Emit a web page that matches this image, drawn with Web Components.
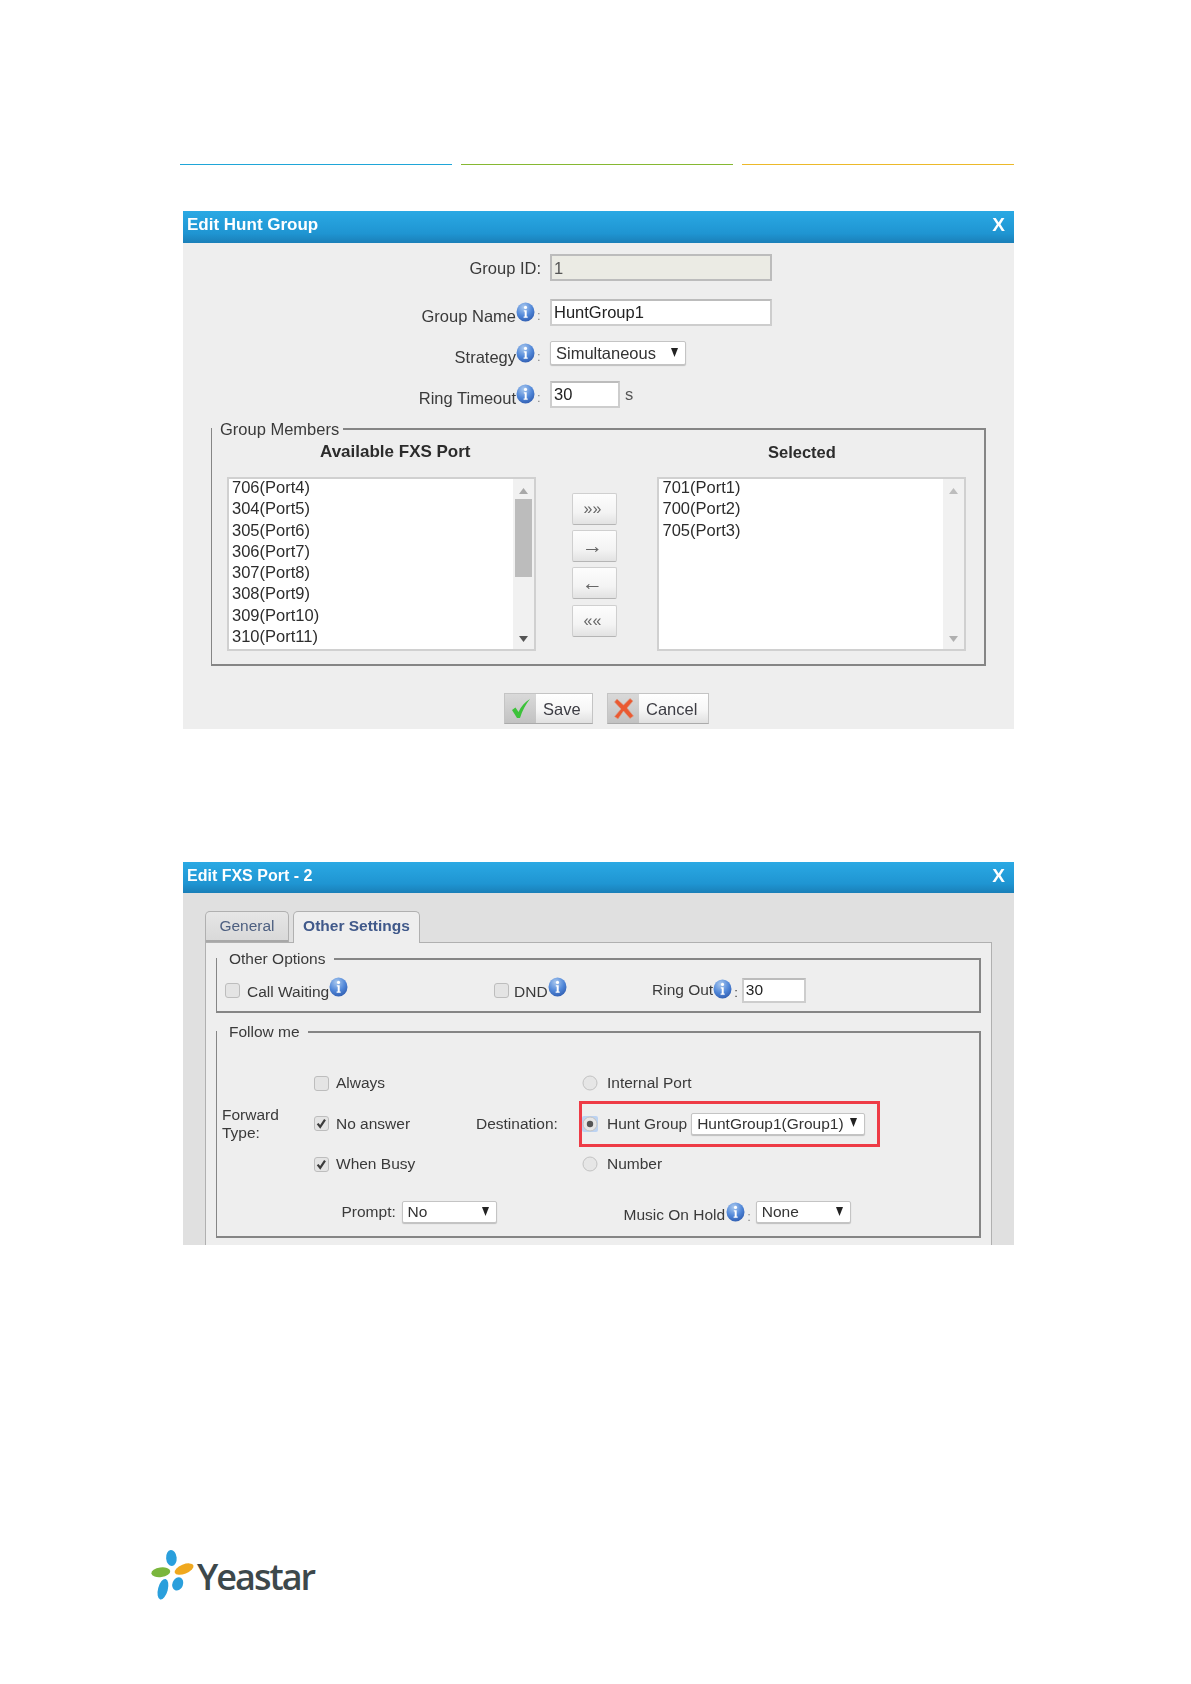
<!DOCTYPE html>
<html>
<head>
<meta charset="utf-8">
<title>Hunt Group</title>
<style>
  body { margin: 0; background: #fff; font: 16.5px/20px "Liberation Sans", Arial, sans-serif; color: #333; }
  main { width: 1191px; height: 1684px; box-sizing: border-box; padding: 164px 177px 0 180px; display: flex; flex-direction: column; overflow: hidden; }
  rule-bars { margin-bottom: 46px; }
  edit-dialog { margin-left: 3px; filter: blur(.35px); }
  .second { margin-top: 133px; font-size: 15.5px; }
  yeastar-logo { margin-top: 304px; margin-left: -30px; }
</style>
</head>
<body>
<main>
  <rule-bars></rule-bars>
  <edit-dialog heading="Edit Hunt Group" style="--head-h:32px;--head-size:17px"><hunt-group-form></hunt-group-form></edit-dialog>
  <edit-dialog class="second" heading="Edit FXS Port - 2" style="--head-h:31px;--head-size:16px"><fxs-port-form></fxs-port-form></edit-dialog>
  <yeastar-logo></yeastar-logo>
</main>

<script>
class RuleBars extends HTMLElement {
  connectedCallback() {
    this.attachShadow({ mode: "open" }).innerHTML = `
      <style>
        :host { display: flex; gap: 9px; }
        i { flex: 1; height: 1px; }
      </style>
      <i style="background:#1fa6d8"></i><i style="background:#86b832"></i><i style="background:#ecb92a"></i>`;
  }
}

class EditDialog extends HTMLElement {
  connectedCallback() {
    this.attachShadow({ mode: "open" }).innerHTML = `
      <style>
        :host { display: block; }
        header {
          height: var(--head-h); box-sizing: border-box; display: flex; align-items: center; justify-content: space-between;
          padding: 0 9px 4px 4px; color: #fff; font-weight: bold; font-size: var(--head-size);
          background: linear-gradient(#2aa9e4, #1f95d2 70%, #1a7fb8);
        }
        b { font-size: 19px; }
      </style>
      <header><span>${this.getAttribute("heading")}</span><b>X</b></header>
      <slot></slot>`;
  }
}

class InfoIcon extends HTMLElement {
  connectedCallback() {
    this.attachShadow({ mode: "open" }).innerHTML = `
      <style>:host { display: inline-flex; flex: none; } svg { display: block; }</style>
      <svg width="19" height="20" viewBox="0 0 19 20">
        <defs><radialGradient id="g" cx=".4" cy=".25" r=".85">
          <stop offset="0" stop-color="#a9c8ee"/><stop offset=".55" stop-color="#4f86d8"/><stop offset="1" stop-color="#2a55a8"/>
        </radialGradient></defs>
        <ellipse cx="9.5" cy="10" rx="9" ry="9.5" fill="url(#g)"/>
        <circle cx="9.5" cy="5.4" r="1.6" fill="#fff"/>
        <path d="M7.8 8.2h2.9v6.2h1v1.4H7.6v-1.4h1.1V9.6h-.9z" fill="#fff"/>
      </svg>`;
  }
}

class FakeSelect extends HTMLElement {
  connectedCallback() {
    this.attachShadow({ mode: "open" }).innerHTML = `
      <style>
        :host {
          display: flex; align-items: center; justify-content: space-between; box-sizing: border-box;
          background: #fff; border: 1px solid #c4c4c4; border-radius: 2px; box-shadow: 0 1px 1px rgba(0,0,0,.2);
          padding: 0 7px 0 5px; color: #333;
        }
        svg { flex: none; margin-bottom: 2px; }
      </style>
      <span>${this.getAttribute("value")}</span>
      <svg width="7" height="9" viewBox="0 0 7 9"><path d="M0 0h7L3.5 9z" fill="#222"/></svg>`;
  }
}

class TextBox extends HTMLElement {
  connectedCallback() {
    this.attachShadow({ mode: "open" }).innerHTML = `
      <style>
        :host {
          display: flex; align-items: center; box-sizing: border-box; padding-left: 2px;
          background: #fff; border: 2px solid #cdcdcd; border-top-color: #bcbcbc; color: #222;
        }
        :host([disabled]) { background: #ebebe4; color: #555; border-color: #bcbcbc; }
      </style>
      <span>${this.getAttribute("value")}</span>`;
  }
}

class GroupBox extends HTMLElement {
  connectedCallback() {
    this.attachShadow({ mode: "open" }).innerHTML = `
      <style>
        :host { display: block; }
        fieldset { margin: 0; padding: 0; border: 2px solid #858585; border-left-width: 1.5px; min-width: 0; }
        legend { padding: var(--legend-pad, 0 4px 0 8px); margin: 0; line-height: 20px; color: #3a3a3a; }
      </style>
      <fieldset><legend>${this.getAttribute("legend")}</legend><slot></slot></fieldset>`;
  }
}

class ListBox extends HTMLElement {
  connectedCallback() {
    const items = this.getAttribute("items").split(",");
    const full = this.hasAttribute("scrolled");
    this.attachShadow({ mode: "open" }).innerHTML = `
      <style>
        :host {
          display: flex; height: 174px; box-sizing: border-box; background: #fff;
          border: 2px solid #d0d0d0; overflow: hidden;
        }
        ul { flex: 1; margin: -2px 0 0; padding: 0 0 0 3px; list-style: none; color: #2c2c2c; }
        li { height: 21.3px; line-height: 21px; }
        .bar { width: 21px; background: #f1f1f1; display: flex; flex-direction: column; align-items: center; padding: 9px 0 7px; box-sizing: border-box; }
        .thumb { width: 17px; height: 78px; background: #bcbcbc; margin-top: 5px; visibility: ${full ? "visible" : "hidden"}; }
        .gap { flex: 1; }
        svg { fill: ${full ? "#a8a8a8" : "#bdbdbd"}; }
        svg.down { fill: ${full ? "#555" : "#b0b0b0"}; }
      </style>
      <ul>${items.map((t) => `<li>${t}</li>`).join("")}</ul>
      <div class="bar">
        <svg width="9" height="6" viewBox="0 0 9 6"><path d="M4.5 0L9 6H0z"/></svg>
        <div class="thumb"></div><div class="gap"></div>
        <svg class="down" width="9" height="6" viewBox="0 0 9 6"><path d="M0 0h9L4.5 6z"/></svg>
      </div>`;
  }
}

class MoveButton extends HTMLElement {
  connectedCallback() {
    this.attachShadow({ mode: "open" }).innerHTML = `
      <style>
        :host {
          display: flex; align-items: center; justify-content: center; height: 32px; box-sizing: border-box;
          padding-right: 4px; border: 1px solid #cfcfcf; border-bottom-color: #b5b5b5; border-radius: 2px;
          background: linear-gradient(#fdfdfd, #f4f4f4 60%, #e2e2e2); color: #666; font-size: 16px;
        }
      </style>
      <slot></slot>`;
  }
}

class ActionButton extends HTMLElement {
  connectedCallback() {
    const save = this.getAttribute("kind") === "save";
    const icon = save
      ? `<path d="M2 13l3.5-2.5 3 4.5C11 9.5 15 5 20 2c-4 5-8 12-10 19h-3z" fill="#3cc23a"/>`
      : `<path d="M4 2l6.5 6L17 1.5l3 2.5-6 7 6.5 8-3.5 2.5-6.5-7.5L5 22l-3.5-2.5L8 12 1.5 5z" fill="#ea5a32" stroke="#d8a08c" stroke-width=".7"/>`;
    this.attachShadow({ mode: "open" }).innerHTML = `
      <style>
        :host {
          display: flex; height: 31px; box-sizing: border-box; border: 1px solid #c4c4c4; border-bottom-color: #aaa;
          background: linear-gradient(#fff, #f6f6f6 55%, #e0e0e0); color: #3d3d44; overflow: hidden;
        }
        .ic { width: 31px; display: flex; align-items: center; justify-content: center; background: linear-gradient(#d9d9d9, #c2c2c2); }
        span { flex: 1; align-self: center; padding-left: 7px; }
      </style>
      <div class="ic"><svg width="22" height="24" viewBox="0 0 22 24">${icon}</svg></div>
      <span><slot></slot></span>`;
  }
}

class HuntGroupForm extends HTMLElement {
  connectedCallback() {
    const row = (label, info, control, mt, extra = "") => `
      <div class="row" style="margin-top:${mt}px">
        <div class="label">
          <span class="${info ? "low" : ""}">${label}${info ? "" : ":"}</span>${info ? `<info-icon></info-icon><span class="low colon">:</span>` : ""}
        </div>
        ${control}${extra}
      </div>`;
    this.attachShadow({ mode: "open" }).innerHTML = `
      <style>
        :host { display: block; background: #eee; height: 486px; padding-top: 11px; box-sizing: border-box; }
        .row { display: flex; align-items: center; }
        .label { width: 358px; margin-right: 9px; display: flex; align-items: center; justify-content: flex-end; color: #3a3a3a; }
        .low { padding-top: 8px; }
        .colon { color: #888; font-size: 13px; margin-left: 2px; width: 4px; }
        .unit { margin-left: 5px; color: #555; }
        group-box { margin: 11px 28px 0; }
        .heads { display: flex; height: 25px; align-items: center; font-weight: bold; font-size: 17px; color: #2c2c2c; }
        .heads div:first-child { width: 432px; padding-left: 108px; box-sizing: border-box; }
        .heads div:last-child { margin-left: 124px; font-size: 16.5px; }
        .lists { display: flex; padding: 13px 18px 13px 15px; }
        list-box { width: 309px; }
        list-box + .moves + list-box { width: 309px; }
        .moves { width: 46px; margin: 16px 40px 0 36px; display: flex; flex-direction: column; gap: 5.2px; }
        .moves .big { font-size: 21px; }
        .actions { display: flex; gap: 14px; margin: 27px 0 0 321px; }
      </style>
      ${row("Group ID", false, `<text-box value="1" disabled style="width:222px;height:27px"></text-box>`, 0)}
      ${row("Group Name", true, `<text-box value="HuntGroup1" style="width:222px;height:27px"></text-box>`, 17)}
      ${row("Strategy", true, `<fake-select value="Simultaneous" style="width:136px;height:24px"></fake-select>`, 13)}
      ${row("Ring Timeout", true, `<text-box value="30" style="width:70px;height:27px"></text-box>`, 13, `<span class="unit">s</span>`)}
      <group-box legend="Group Members">
        <div class="heads"><div>Available FXS Port</div><div>Selected</div></div>
        <div class="lists">
          <list-box scrolled items="706(Port4),304(Port5),305(Port6),306(Port7),307(Port8),308(Port9),309(Port10),310(Port11)"></list-box>
          <div class="moves">
            <move-button>»»</move-button><move-button class="big">→</move-button><move-button class="big">←</move-button><move-button>««</move-button>
          </div>
          <list-box items="701(Port1),700(Port2),705(Port3)"></list-box>
        </div>
      </group-box>
      <div class="actions">
        <action-button kind="save" style="width:89px">Save</action-button>
        <action-button kind="cancel" style="width:102px">Cancel</action-button>
      </div>`;
  }
}

class TickBox extends HTMLElement {
  connectedCallback() {
    const on = this.hasAttribute("checked");
    this.attachShadow({ mode: "open" }).innerHTML = `
      <style>
        :host { display: inline-flex; align-items: center; gap: 7px; color: #3a3a3a; }
        svg { flex: none; display: block; }
        span { padding-top: var(--label-drop, 0); }
      </style>
      <svg width="15" height="15" viewBox="0 0 15 15">
        <rect x=".5" y=".5" width="14" height="14" rx="2.5" fill="#e4e4e4" stroke="#bdbdbd"/>
        ${on ? `<path d="M3.6 7.6l2.6 3.2L11 3.6" fill="none" stroke="#3c3c3c" stroke-width="2.2"/>` : ""}
      </svg>
      <span><slot></slot></span>`;
  }
}

class RadioDot extends HTMLElement {
  connectedCallback() {
    const on = this.hasAttribute("checked");
    this.attachShadow({ mode: "open" }).innerHTML = `
      <style>
        :host { display: inline-flex; align-items: center; gap: 9px; color: #3a3a3a; }
        svg { flex: none; display: block; }
      </style>
      <svg width="16" height="16" viewBox="0 0 16 16">
        ${on ? `<rect width="16" height="16" rx="2" fill="#bcd3f2"/>` : ""}
        <circle cx="8" cy="8" r="7" fill="#e6e6e6" stroke="#c2c2c2"/>
        ${on ? `<circle cx="8" cy="8" r="3.2" fill="#555"/>` : ""}
      </svg>
      <span><slot></slot></span>`;
  }
}

class FxsPortForm extends HTMLElement {
  connectedCallback() {
    this.attachShadow({ mode: "open" }).innerHTML = `
      <style>
        :host { display: block; box-sizing: border-box; height: 352px; overflow: hidden; background: #e0e0e0; padding: 18px 22px 0; }
        .tabs { display: flex; gap: 4px; height: 31px; align-items: flex-end; }
        .tab {
          height: 100%; display: flex; align-items: center; justify-content: center; box-sizing: border-box; padding-bottom: 3px;
          border: 1px solid #b0b0b0; border-bottom: 0; border-radius: 5px 5px 0 0; color: #4d5f80;
        }
        .general { width: 84px; background: linear-gradient(#e6e6e6, #d8d8d8); box-shadow: inset 0 -2px 0 #a8a8a8; }
        .other { width: 127px; background: #eee; font-weight: bold; color: #40598a; margin-bottom: -1px; height: calc(100% + 1px); position: relative; }
        .panel { border: 1px solid #b0b0b0; background: #eee; padding: 6px 10px 40px; }
        group-box { --legend-pad: 0 8px 0 12px; }
        .opts { display: flex; align-items: center; height: 42px; padding: 0 0 0 8px; box-sizing: border-box; --label-drop: 3px; }
        .opts > div { display: flex; align-items: center; }
        .c1 { width: 269px; }
        .c2 { width: 158px; }
        .c3 span { color: #3a3a3a; }
        .c1 info-icon, .c2 info-icon { margin-bottom: 6px; }
        .colon { color: #888; font-size: 13px; margin: 0 4px 0 2px; padding-top: 6px; }
        .c3 info-icon { margin-bottom: 3px; }
        .follow { margin-top: 9px; }
        .grid {
          display: grid; grid-template-columns: 92px 162px 106px 1fr; grid-auto-rows: 40.5px; align-items: center;
          padding: 21px 0 0 5px;
        }
        .fw { grid-row: 1 / span 3; line-height: 18px; color: #3a3a3a; }
        .dest { color: #3a3a3a; }
        .hunt { display: flex; align-items: center; position: relative; }
        .hunt fake-select { margin-left: 4px; }
        .redbox { position: absolute; left: -3px; top: -12px; width: 301px; height: 46px; box-sizing: border-box; border: 3px solid #ee3b46; }
        .bottom { display: flex; align-items: center; padding: 13px 0 9px 124.5px; }
        .bottom .lb { width: 60px; color: #3a3a3a; }
        .music { margin-left: 127px; padding-top: 6px; color: #3a3a3a; }
        .bottom info-icon { margin: 0 0 0 1px; }
        .bottom .colon { margin-right: 5px; padding-top: 9px; }
      </style>
      <div class="tabs"><div class="tab general">General</div><div class="tab other">Other Settings</div></div>
      <div class="panel">
        <group-box legend="Other Options">
          <div class="opts">
            <div class="c1"><tick-box>Call Waiting</tick-box><info-icon></info-icon></div>
            <div class="c2"><tick-box style="gap:5px">DND</tick-box><info-icon></info-icon></div>
            <div class="c3">
              <span>Ring Out</span><info-icon></info-icon><span class="colon">:</span>
              <text-box value="30" style="width:64px;height:25px"></text-box>
            </div>
          </div>
        </group-box>
        <group-box class="follow" legend="Follow me">
          <div class="grid">
            <div class="fw">Forward<br>Type:</div>
            <tick-box>Always</tick-box><span></span><radio-dot>Internal Port</radio-dot>
            <tick-box checked>No answer</tick-box>
            <span class="dest">Destination:</span>
            <div class="hunt">
              <radio-dot checked>Hunt Group</radio-dot>
              <fake-select value="HuntGroup1(Group1)" style="width:174px;height:22px"></fake-select>
              <div class="redbox"></div>
            </div>
            <tick-box checked style="grid-column:2">When Busy</tick-box><span></span><radio-dot>Number</radio-dot>
          </div>
          <div class="bottom">
            <span class="lb">Prompt:</span>
            <fake-select value="No" style="width:95px;height:22px"></fake-select>
            <span class="music">Music On Hold</span><info-icon></info-icon><span class="colon">:</span>
            <fake-select value="None" style="width:95px;height:22px"></fake-select>
          </div>
        </group-box>
      </div>`;
  }
}

class YeastarLogo extends HTMLElement {
  connectedCallback() {
    this.attachShadow({ mode: "open" }).innerHTML = `
      <style>
        :host { display: flex; align-items: center; height: 55px; }
        svg { flex: none; display: block; }
        span { font: 600 36px/52px "Open Sans", sans-serif; letter-spacing: -2px; color: #3d484b; margin: 1px 0 0 0; }
      </style>
      <svg width="47" height="55" viewBox="0 0 44 52">
        <ellipse cx="20" cy="8.5" rx="5" ry="7.5" transform="rotate(-5 20 8.5)" fill="#2a9fdc"/>
        <ellipse cx="10" cy="22" rx="9" ry="4.6" transform="rotate(-8 10 22)" fill="#7ab63c"/>
        <ellipse cx="32" cy="19" rx="9.5" ry="4.4" transform="rotate(-22 32 19)" fill="#f0a81e"/>
        <ellipse cx="12" cy="38" rx="4.6" ry="10" transform="rotate(15 12 38)" fill="#2a9fdc"/>
        <ellipse cx="26" cy="33" rx="5" ry="6.5" transform="rotate(22 26 33)" fill="#2a9fdc"/>
      </svg>
      <span>Yeastar</span>`;
  }
}

customElements.define("rule-bars", RuleBars);
customElements.define("edit-dialog", EditDialog);
customElements.define("info-icon", InfoIcon);
customElements.define("fake-select", FakeSelect);
customElements.define("text-box", TextBox);
customElements.define("group-box", GroupBox);
customElements.define("list-box", ListBox);
customElements.define("move-button", MoveButton);
customElements.define("action-button", ActionButton);
customElements.define("hunt-group-form", HuntGroupForm);
customElements.define("tick-box", TickBox);
customElements.define("radio-dot", RadioDot);
customElements.define("fxs-port-form", FxsPortForm);
customElements.define("yeastar-logo", YeastarLogo);
</script>
</body>
</html>
